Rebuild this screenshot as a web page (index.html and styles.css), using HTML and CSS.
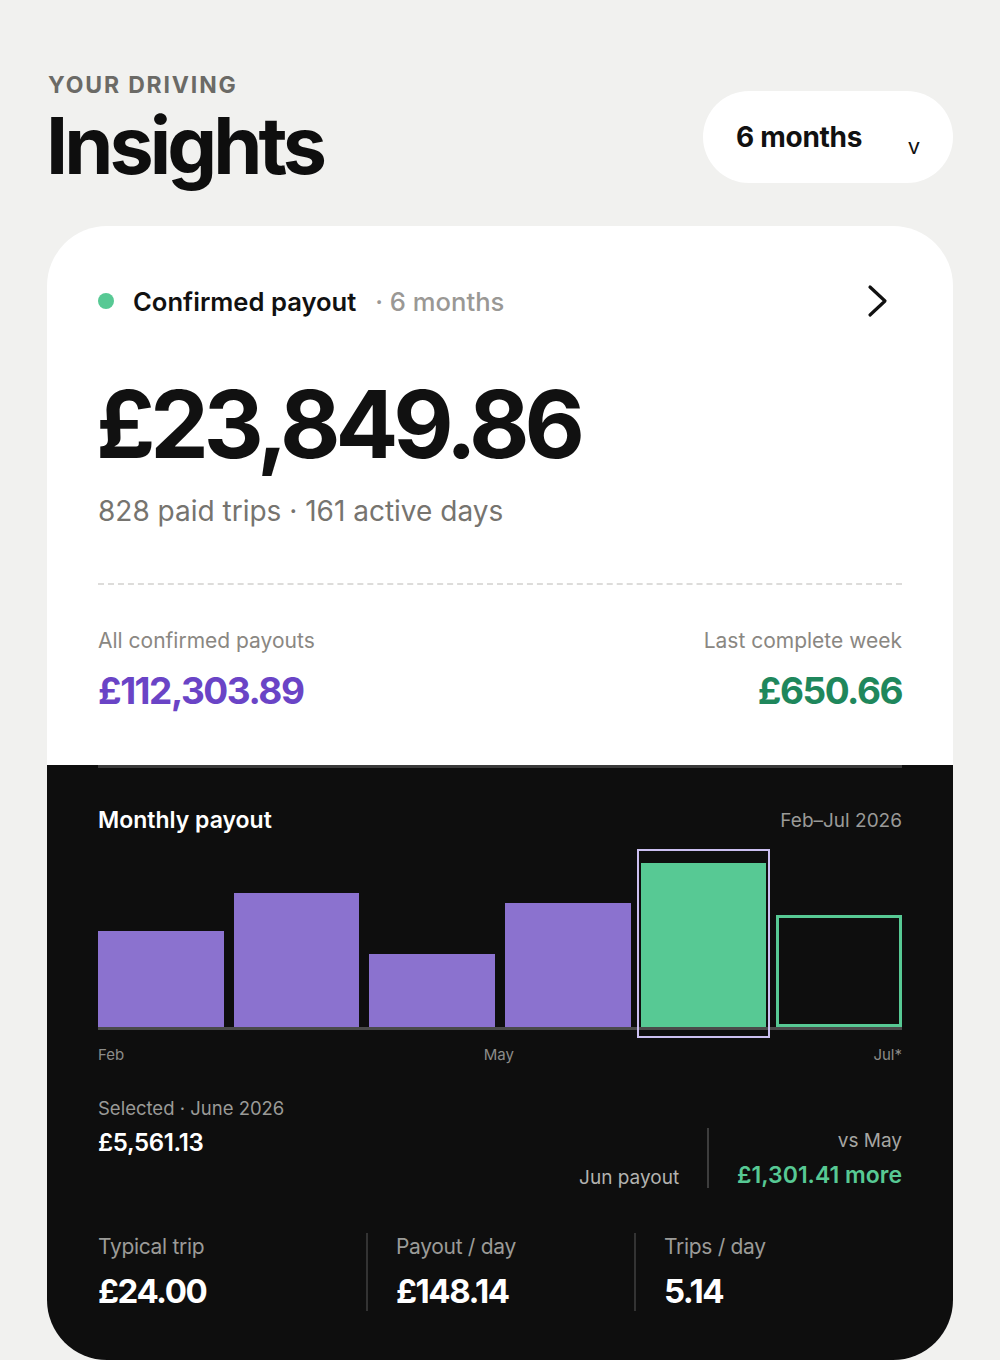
FILE: index.html
```html
<!DOCTYPE html>
<html lang="en">
<head>
<meta charset="utf-8">
<title>Insights</title>
<link rel="stylesheet" href="styles.css">
</head>
<body>
<div class="page">
  <header class="top">
    <div class="titles">
      <div class="eyebrow">YOUR DRIVING</div>
      <h1 class="title">Insights</h1>
    </div>
    <button class="pill"><span class="pill-text">6 months</span><span class="pill-caret">v</span></button>
  </header>

  <section class="card">
    <div class="card-top">
      <div class="head-row">
        <span class="dot"></span>
        <span class="head-title">Confirmed payout</span>
        <span class="head-sub">· 6 months</span>
        <svg class="chev" width="24" height="34" viewBox="0 0 24 34"><path d="M4 3 L19 17 L4 31" fill="none" stroke="#111" stroke-width="3.2" stroke-linecap="round" stroke-linejoin="round"/></svg>
      </div>
      <div class="big">£23,849.86</div>
      <div class="sub">828 paid trips · 161 active days</div>
      <div class="dash"></div>
      <div class="totals">
        <div class="tot">
          <div class="tot-label">All confirmed payouts</div>
          <div class="tot-val purple">£112,303.89</div>
        </div>
        <div class="tot right">
          <div class="tot-label">Last complete week</div>
          <div class="tot-val green">£650.66</div>
        </div>
      </div>
    </div>

    <div class="card-dark">
      <div class="dark-inner">
        <div class="chart-head">
          <span class="chart-title">Monthly payout</span>
          <span class="chart-range">Feb–Jul 2026</span>
        </div>
        <div class="chart">
          <div class="col"><div class="bar" style="height:96px"></div></div>
          <div class="col"><div class="bar" style="height:134px"></div></div>
          <div class="col"><div class="bar" style="height:73px"></div></div>
          <div class="col"><div class="bar" style="height:124px"></div></div>
          <div class="col selected"><div class="bar bar-green" style="height:164px"></div><div class="sel-box"></div></div>
          <div class="col"><div class="bar bar-outline" style="height:112px"></div></div>
        </div>
        <div class="axis">
          <span>Feb</span><span>May</span><span>Jul*</span>
        </div>

        <div class="sel-row">
          <div class="sel-left">
            <div class="sel-label">Selected · June 2026</div>
            <div class="sel-val">£5,561.13</div>
          </div>
          <div class="sel-right">
            <div class="jun">Jun payout</div>
            <div class="vdiv"></div>
            <div class="vs">
              <div class="vs-label">vs May</div>
              <div class="vs-val">£1,301.41 more</div>
            </div>
          </div>
        </div>

        <div class="stats">
          <div class="stat">
            <div class="stat-label">Typical trip</div>
            <div class="stat-val">£24.00</div>
          </div>
          <div class="stat">
            <div class="stat-label">Payout / day</div>
            <div class="stat-val">£148.14</div>
          </div>
          <div class="stat">
            <div class="stat-label">Trips / day</div>
            <div class="stat-val">5.14</div>
          </div>
        </div>
      </div>
    </div>
  </section>
</div>
</body>
</html>
```

FILE: styles.css
```css
* { box-sizing: border-box; }
html, body { margin: 0; padding: 0; }
body {
  background: #f1f1ef;
  font-family: Inter, "Noto Sans", sans-serif;
  color: #111;
}
.page { padding: 0 47px; }

.top {
  display: flex;
  justify-content: space-between;
  align-items: flex-start;
  padding-top: 72px;
  height: 226px;
}
.titles { padding-left: 1px; }
.eyebrow {
  font-size: 23px;
  line-height: 26px;
  font-weight: 700;
  letter-spacing: 0.08em;
  color: #6b6a66;
}
.title {
  margin: 7px 0 0 -2px;
  font-size: 79px;
  line-height: 80px;
  font-weight: 700;
  letter-spacing: -0.05em;
  color: #0e0e0e;
}
.pill {
  margin-top: 19px;
  width: 250px;
  height: 92px;
  border: 0;
  border-radius: 46px;
  background: #fff;
  display: flex;
  align-items: center;
  padding: 0 33px 0 33px;
  font-family: inherit;
  cursor: pointer;
}
.pill-text {
  font-size: 28px;
  font-weight: 700;
  color: #111;
  letter-spacing: -0.01em;
}
.pill-caret {
  margin-left: auto;
  font-size: 22px;
  color: #111;
  margin-top: 18px;
}

.card {
  border-radius: 60px;
  overflow: hidden;
  background: #fff;
}
.card-top { padding: 59px 51px 52px; }
.head-row {
  display: flex;
  align-items: center;
  height: 32px;
}
.dot {
  width: 16px; height: 16px;
  border-radius: 50%;
  background: #57c994;
  margin-right: 19px;
}
.head-title {
  font-size: 25.6px;
  font-weight: 600;
  color: #111;
}
.head-sub {
  margin-left: 19px;
  font-size: 25.6px;
  font-weight: 500;
  color: #9a9895;
}
.chev { margin-left: auto; margin-right: 12px; }

.big {
  margin-top: 57px;
  font-size: 93px;
  line-height: 100px;
  font-weight: 700;
  letter-spacing: -0.055em;
  color: #111;
  margin-left: -2px;
}
.sub {
  margin-top: 19px;
  font-size: 28px;
  line-height: 36px;
  color: #76746f;
}
.dash {
  margin-top: 54px;
  border-top: 2px dashed #dddcda;
}
.totals {
  display: flex;
  justify-content: space-between;
  margin-top: 42px;
}
.tot.right { text-align: right; }
.tot-label {
  font-size: 21px;
  line-height: 28px;
  color: #8a8782;
}
.tot-val {
  margin-top: 14px;
  font-size: 37px;
  line-height: 44px;
  font-weight: 700;
  letter-spacing: -0.04em;
}
.purple { color: #6a44c6; }
.green { color: #1f875c; }

.card-dark {
  background: #0e0e0e;
  padding: 0 51px 49px;
}
.dark-inner { border-top: 3px solid #3a3a3a; }
.chart-head {
  display: flex;
  justify-content: space-between;
  align-items: center;
  margin-top: 37px;
  height: 30px;
}
.chart-title {
  font-size: 23px;
  font-weight: 600;
  color: #fff;
}
.chart-range {
  font-size: 19px;
  color: #9a9a98;
}
.chart {
  margin-top: 16px;
  height: 179px;
  display: flex;
  gap: 10px;
  align-items: flex-end;
  border-bottom: 3px solid #4a4a4a;
}
.col {
  flex: 1;
  height: 100%;
  display: flex;
  align-items: flex-end;
  position: relative;
}
.bar {
  width: 100%;
  background: #8b72cf;
}
.bar-green { background: #57c994; }
.bar-outline {
  background: transparent;
  border: 3px solid #57c994;
}
.sel-box {
  position: absolute;
  left: -4px; right: -4px;
  top: -2px; bottom: -11px;
  border: 2px solid #cbbff0;
}
.axis {
  display: flex;
  justify-content: space-between;
  margin-top: 15px;
  font-size: 15px;
  line-height: 20px;
  color: #8c8c89;
}

.sel-row {
  display: flex;
  justify-content: space-between;
  align-items: flex-start;
  margin-top: 30px;
}
.sel-label {
  font-size: 18.5px;
  line-height: 26px;
  color: #9a9a97;
}
.sel-val {
  margin-top: 6px;
  font-size: 24px;
  line-height: 32px;
  font-weight: 600;
  color: #fff;
  letter-spacing: -0.015em;
}
.sel-right {
  display: flex;
  align-items: flex-end;
  margin-top: 33px;
}
.jun {
  font-size: 19px;
  line-height: 26px;
  color: #b3b3b0;
  margin-bottom: -3px;
}
.vdiv {
  width: 2px;
  height: 60px;
  background: #3d3d3d;
  margin: 0 28px;
}
.vs { text-align: right; }
.vs-label {
  font-size: 19px;
  line-height: 26px;
  color: #a6a6a3;
}
.vs-val {
  margin-top: 5px;
  font-size: 23px;
  line-height: 32px;
  font-weight: 600;
  color: #57c994;
  margin-bottom: -3px;
}

.stats {
  display: grid;
  grid-template-columns: 1fr 1fr 1fr;
  margin-top: 45px;
}
.stat { padding-left: 28px; border-left: 2px solid #333; }
.stat:first-child { padding-left: 0; border-left: 0; }
.stat-label {
  font-size: 21px;
  line-height: 28px;
  color: #9b9b98;
  letter-spacing: -0.015em;
}
.stat-val {
  margin-top: 10px;
  font-size: 33px;
  line-height: 40px;
  font-weight: 700;
  color: #fff;
  letter-spacing: -0.045em;
}
```
